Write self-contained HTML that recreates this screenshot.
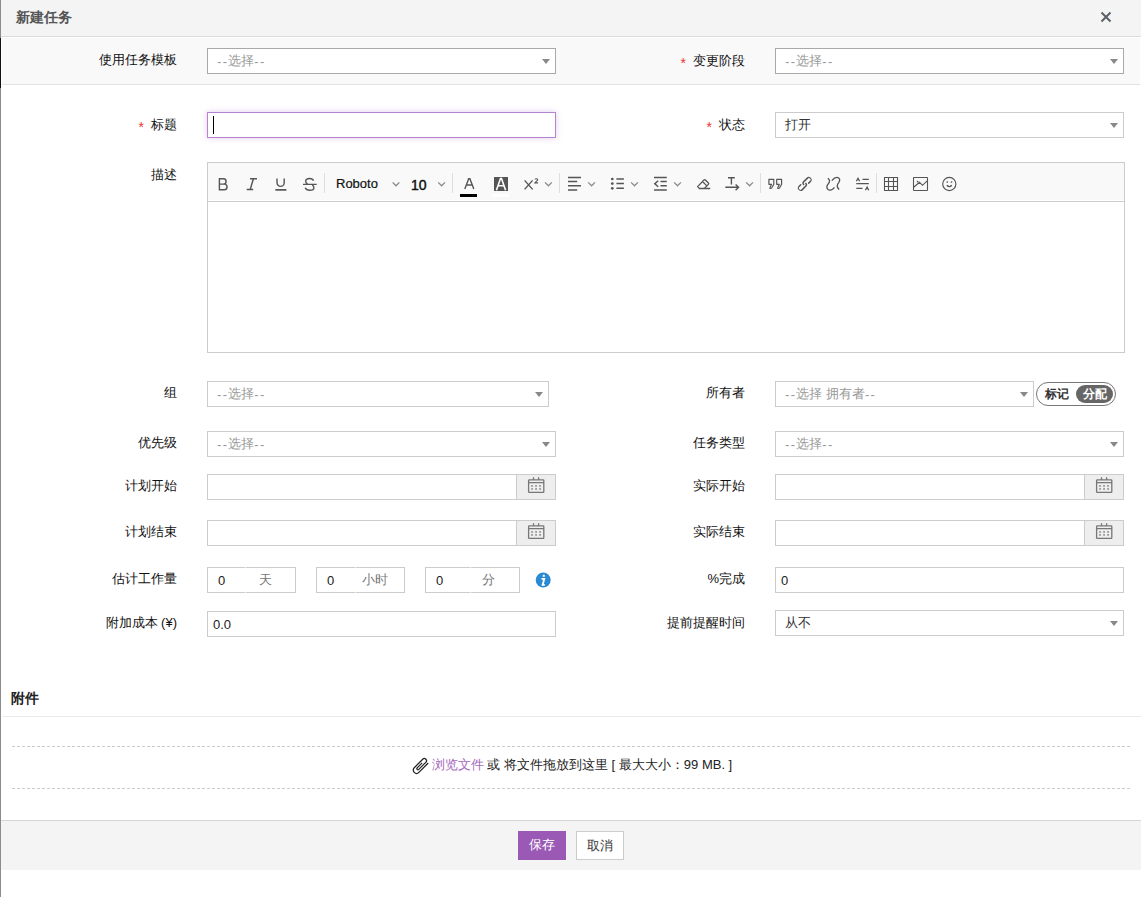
<!DOCTYPE html>
<html><head><meta charset="utf-8">
<style>
*{box-sizing:border-box;margin:0;padding:0}
html,body{width:1141px;height:897px;overflow:hidden;background:#fff;font-family:"Liberation Sans",sans-serif;font-size:13px;color:#222}
.a{position:absolute}
#edge{left:0;top:0;width:1px;height:897px;background:#8c8c8c}
#edge2{left:0;top:38px;width:1px;height:50px;background:#111}
#hdr{left:1px;top:0;width:1140px;height:37px;background:#f4f4f4;border-bottom:1px solid #dcdcdc}
#hdr .t{left:15px;top:9px;font-size:14px;font-weight:bold;color:#555;line-height:17px}
#tplrow{left:2px;top:38px;width:1138px;height:47px;background:#f9f9f9;border-bottom:1px solid #e2e2e2}
.lbl{position:absolute;text-align:right;width:200px;line-height:16px;font-size:13px;color:#111;white-space:nowrap}
.req{color:#e8322f;font-size:14px;margin-right:7px;position:relative;top:3px}
.box{position:absolute;height:26px;border:1px solid #ccc;background:#fff;font-size:13px;line-height:24px;padding-left:9px;color:#333;white-space:nowrap}
.box.ph{color:#999}
.d{font-weight:normal;letter-spacing:1.3px;position:relative;top:1px}
.box.dk{border-color:#a9a9a9}
.box.in{padding-left:5px;line-height:26px;color:#222}
.box.est{padding-left:10px;line-height:26px;color:#222}
.arr{position:absolute;right:5px;top:10px;width:0;height:0;border-left:4px solid transparent;border-right:4px solid transparent;border-top:5px solid #888}
.focus{border-color:#b584cf;box-shadow:0 0 6px rgba(170,110,200,.35)}
.cal{position:absolute;top:-1px;right:-1px;width:40px;height:26px;background:#eee;border:1px solid #ccc}
.unit{position:absolute;top:0;color:#777;line-height:24px}
#editor{left:207px;top:162px;width:918px;height:191px;border:1px solid #ccc}
#tb{left:0;top:0;width:916px;height:39px;background:#f9f9f9;border-bottom:1px solid #ccc;box-shadow:inset 0 -1px #fff}
.tbt{position:absolute;color:#111;white-space:nowrap}
#att{left:11px;top:690px;font-size:14px;font-weight:bold;color:#222;line-height:17px}
#attline{left:2px;top:716px;width:1139px;height:1px;background:#eaeaea}
.dash{position:absolute;left:12px;width:1118px;height:1px;background:repeating-linear-gradient(90deg,#ccc 0 3px,transparent 3px 5px)}
#droptxt{left:2px;top:757px;width:1141px;text-align:center;line-height:16px;font-size:13px;color:#222}
#ftr{left:1px;top:820px;width:1140px;height:50px;background:#f4f4f4;border-top:1px solid #d6d6d6}
.btn{position:absolute;top:10px;height:29px;font-size:13px;line-height:27px;text-align:center}
</style></head><body>
<div class="a" id="edge"></div><div class="a" id="edge2"></div>
<div class="a" id="hdr"><div class="a t">新建任务</div></div>
<div class="a" id="tplrow"></div>

<div class="lbl" style="left:-23px;top:52px">使用任务模板</div>
<div class="box ph dk" style="left:207px;top:48px;width:349px"><b class="d">--</b>选择<b class="d">--</b><i class="arr"></i></div>
<div class="lbl" style="left:545px;top:52px"><span class="req">*</span>变更阶段</div>
<div class="box ph dk" style="left:775px;top:48px;width:349px"><b class="d">--</b>选择<b class="d">--</b><i class="arr"></i></div>

<div class="lbl" style="left:-23px;top:116px"><span class="req">*</span>标题</div>
<div class="box focus" style="left:207px;top:112px;width:349px"></div>
<div class="lbl" style="left:545px;top:116px"><span class="req">*</span>状态</div>
<div class="box" style="left:775px;top:112px;width:349px">打开<i class="arr"></i></div>

<div class="lbl" style="left:-23px;top:167px">描述</div>
<div class="a" id="editor"><div class="a" id="tb"></div></div>
<div class="tbt" style="left:336px;top:176px;font-size:13px;line-height:15px;-webkit-text-stroke:0.2px #111">Roboto</div>
<div class="tbt" style="left:411px;top:177px;font-size:14px;line-height:16px;-webkit-text-stroke:0.45px #111">10</div>

<div class="lbl" style="left:-23px;top:385px">组</div>
<div class="box ph" style="left:207px;top:381px;width:342px"><b class="d">--</b>选择<b class="d">--</b><i class="arr"></i></div>
<div class="lbl" style="left:545px;top:385px">所有者</div>
<div class="box ph" style="left:775px;top:381px;width:259px"><b class="d">--</b>选择 拥有者<b class="d">--</b><i class="arr"></i></div>
<div class="a" style="left:1036px;top:382px;width:80px;height:24px;border:1px solid #777;border-radius:12px;background:#fff"></div>
<div class="a" style="left:1045px;top:387px;font-size:12px;font-weight:bold;color:#333;line-height:15px">标记</div>
<div class="a" style="left:1076px;top:385px;width:37px;height:18px;border-radius:9px;background:#666"></div>
<div class="a" style="left:1083px;top:387px;font-size:12px;font-weight:bold;color:#fff;line-height:15px">分配</div>

<div class="lbl" style="left:-23px;top:435px">优先级</div>
<div class="box ph" style="left:207px;top:431px;width:349px"><b class="d">--</b>选择<b class="d">--</b><i class="arr"></i></div>
<div class="lbl" style="left:545px;top:435px">任务类型</div>
<div class="box ph" style="left:775px;top:431px;width:349px"><b class="d">--</b>选择<b class="d">--</b><i class="arr"></i></div>

<div class="lbl" style="left:-23px;top:478px">计划开始</div>
<div class="box" style="left:207px;top:474px;width:349px"><div class="cal"></div></div>
<div class="lbl" style="left:545px;top:478px">实际开始</div>
<div class="box" style="left:775px;top:474px;width:349px"><div class="cal"></div></div>

<div class="lbl" style="left:-23px;top:524px">计划结束</div>
<div class="box" style="left:207px;top:520px;width:349px"><div class="cal"></div></div>
<div class="lbl" style="left:545px;top:524px">实际结束</div>
<div class="box" style="left:775px;top:520px;width:349px"><div class="cal"></div></div>

<div class="lbl" style="left:-23px;top:571px">估计工作量</div>
<div class="box est" style="left:207px;top:567px;width:89px">0<span class="unit" style="left:51px">天</span></div>
<div class="box est" style="left:316px;top:567px;width:89px">0<span class="unit" style="left:45px">小时</span></div>
<div class="box est" style="left:425px;top:567px;width:95px">0<span class="unit" style="left:56px">分</span></div>
<div class="a" style="left:245px;top:567px;width:1px;height:1px;background:#f2f2f2"></div><div class="a" style="left:245px;top:592px;width:1px;height:1px;background:#f2f2f2"></div><div class="a" style="left:355px;top:567px;width:1px;height:1px;background:#f2f2f2"></div><div class="a" style="left:355px;top:592px;width:1px;height:1px;background:#f2f2f2"></div><div class="a" style="left:470px;top:567px;width:1px;height:1px;background:#f2f2f2"></div><div class="a" style="left:470px;top:592px;width:1px;height:1px;background:#f2f2f2"></div>
<div class="lbl" style="left:545px;top:571px">%完成</div>
<div class="box in" style="left:775px;top:567px;width:349px">0</div>

<div class="lbl" style="left:-23px;top:615px">附加成本 (¥)</div>
<div class="box in" style="left:207px;top:611px;width:349px">0.0</div>
<div class="lbl" style="left:545px;top:615px">提前提醒时间</div>
<div class="box" style="left:775px;top:610px;width:349px">从不<i class="arr"></i></div>

<div class="a" id="att">附件</div>
<div class="a" id="attline"></div>
<div class="dash" style="top:746px"></div>
<div class="dash" style="top:788px"></div>
<div class="a" id="droptxt"><span style="display:inline-block;width:19px"></span><span style="color:#a569bd">浏览文件</span> 或 将文件拖放到这里 [ 最大大小：99 MB. ]</div>

<div class="a" id="ftr">
<div class="btn" style="left:517px;width:48px;background:#9b59b6;color:#fff">保存</div>
<div class="btn" style="left:575px;width:48px;background:#fff;border:1px solid #ccc;color:#333">取消</div>
</div>

<svg class="a" style="left:0;top:0" width="1141" height="897" viewBox="0 0 1141 897" fill="none" stroke-linecap="butt">
<!-- close -->
<path d="M1101.5 12.5L1110.5 21.5M1110.5 12.5L1101.5 21.5" stroke="#5b6168" stroke-width="2"/>
<!-- toolbar separators -->
<g fill="#ddd"><rect x="324" y="173" width="1" height="20"/><rect x="452" y="173" width="1" height="20"/><rect x="559" y="173" width="1" height="20"/><rect x="760" y="173" width="1" height="20"/><rect x="876" y="173" width="1" height="20"/></g>
<g stroke="#555" stroke-width="1.4">
<!-- B -->
<path d="M219.4 178.7H223.4A2.7 2.7 0 0 1 223.4 184.1H219.4ZM219.4 184.1H224.2A2.85 2.85 0 0 1 224.2 189.8H219.4Z"/>
<!-- I -->
<path d="M250 178.7H257M246.7 189.5H253.2M253.4 178.7L250.2 189.5"/>
<!-- U -->
<path d="M277 178.4V182.8A3.6 3.6 0 0 0 284.2 182.8V178.4"/>
<path d="M275.4 189.9H286.4" stroke-width="1.7"/>
<!-- S -->
<path d="M313.6 180.6C313 179.2 311.5 178.5 309.6 178.5C307.3 178.5 305.7 179.7 305.7 181.4C305.7 182.6 306.4 183.3 307.6 183.8M303 184.4H316.7M312.2 185.2C313.3 185.8 313.9 186.7 313.9 187.7C313.9 189.3 312.2 190.3 309.8 190.3C307.5 190.3 305.8 189.4 305.2 187.8"/>
<!-- A forecolor -->
<path d="M464.8 188.9L468.7 178.7H469.9L473.8 188.9M466.4 185H472.2"/>
<!-- X2 -->
<path d="M524.6 180.4L532.6 189.4M532.6 180.4L524.6 189.4"/>
<path d="M534.9 179.4C535.3 178.5 537.7 178.4 537.7 179.7C537.7 180.7 535.6 181.7 534.9 182.9H538.1" stroke-width="1.1"/>
<!-- align -->
<path d="M568 177.4H581M568 181.6H577.2M568 185.7H581M568 189.9H577.2" stroke-width="1.5"/>
<!-- list -->
<path d="M616.4 179H623.9M616.4 183.6H623.9M616.4 188.3H623.9" stroke-width="1.5"/>
<!-- outdent -->
<path d="M654 177.4H666.8M660.5 181.6H666.8M660.5 185.7H666.8M654 189.9H666.8M658.2 180.8L654.8 183.8L658.2 186.8" stroke-width="1.5"/>
<!-- eraser -->
<path d="M697.6 186.6L704 180Q704.7 179.3 705.4 180L708.4 183Q709.1 183.7 708.4 184.4L704.3 188.4H699.3ZM702.5 181.5L706.6 185.6M698.8 188.5H710.2" stroke-width="1.3"/>
<!-- T arrow -->
<path d="M728 177.8H734.8M731.4 177.8V184.6M725.3 187.3H738.6M735.6 184.4L738.6 187.3L735.6 190.2" stroke-width="1.4"/>
<!-- quote -->
<path d="M768.9 179.4H773.8V184.3L771.7 188Q771.4 188.5 770.9 188.5H770.4Q769.7 188.4 770 187.7L771.5 184.3H768.9ZM776.7 179.4H781.6V184.3L779.5 188Q779.2 188.5 778.7 188.5H778.2Q777.5 188.4 777.8 187.7L779.3 184.3H776.7Z" stroke-width="1.2" stroke-linejoin="round"/>
<!-- link -->
<path transform="translate(795.4 174.6) scale(0.778)" fill="#555" stroke="none" d="M6.2 12.3a1 1 0 0 1 1.4 1.4l-2 2a2 2 0 1 0 2.6 2.8l4.8-4.8a1 1 0 0 0 0-1.4 1 1 0 1 1 1.4-1.3 2.9 2.9 0 0 1 0 4L9.6 20a3.9 3.9 0 0 1-5.5-5.5l2-2zm11.6-.6a1 1 0 0 1-1.4-1.4l2-2a2 2 0 1 0-2.6-2.8L11 10.3a1 1 0 0 0 0 1.4A1 1 0 1 1 9.6 13a2.9 2.9 0 0 1 0-4L14.4 4a3.9 3.9 0 0 1 5.5 5.5l-2 2z"/>
<!-- unlink -->
<path d="M827.8 178.2C829.8 179.6 830.1 181.7 828.5 183.5C826.7 185.4 826.2 188 828 189.5C829.8 190.9 832.6 189.7 834.5 187.4M831.8 180.6C833.5 178.5 835.3 177.3 837.2 177.4C839.7 177.6 840.5 180.4 838.7 182.6C836.9 184.6 836.2 186.8 839.2 189.5" stroke-width="1.35"/>
<!-- lineheight-ish -->
<path d="M862.5 179.3H868.8M856.3 183.7H868.8M856.3 188.3H862.5M856.4 181.3L858 178.3L859.6 181.3M865.4 190.3L867.1 187.2L868.7 190.3" stroke-width="1.3"/>
<!-- table -->
<path d="M884.5 177.5H897.5V190.5H884.5ZM888.5 177.5V190.5M893.5 177.5V190.5M884.5 181.5H897.5M884.5 186.5H897.5" stroke-width="1.1"/>
<!-- image -->
<path d="M914 177.5H927Q927.5 177.5 927.5 178V190Q927.5 190.5 927 190.5H914Q913.5 190.5 913.5 190V178Q913.5 177.5 914 177.5ZM914 187L919.5 182.3L922.5 185.3L927.2 180.8" stroke-width="1.1"/>
<!-- emoji -->
<circle cx="949.3" cy="184" r="6.6" stroke-width="1.15"/>
<path d="M946.8 185.3Q949.3 188 951.8 185.3" stroke-width="1.3"/>
</g>
<g fill="#555">
<circle cx="612.3" cy="179" r="1.35"/><circle cx="612.3" cy="183.6" r="1.35"/><circle cx="612.3" cy="188.3" r="1.35"/>
<circle cx="917.6" cy="181.6" r="0.9"/>
<circle cx="947.3" cy="182" r="0.85"/><circle cx="951.5" cy="182" r="0.85"/>
<rect x="494" y="177" width="14" height="14"/>
</g>
<path d="M496.4 190.2L500.5 178.6H501.5L505.6 190.2M497.9 185.8H504.1" stroke="#fff" stroke-width="1.6"/><rect x="492" y="194" width="17" height="3" fill="#fff"/>
<rect x="460" y="194" width="17" height="3" fill="#000"/>
<g stroke="#8a8a8a" stroke-width="1.3">
<path d="M392.6 182.4L396 185.8L399.4 182.4M438.2 182.4L441.6 185.8L445 182.4M545 182.4L548.4 185.8L551.8 182.4M588.2 182.4L591.6 185.8L595 182.4M631.1 182.4L634.5 185.8L637.9 182.4M674.1 182.4L677.5 185.8L680.9 182.4M746.2 182.4L749.6 185.8L753 182.4"/>
</g>
<!-- cursor -->
<rect x="213" y="116" width="1" height="18" fill="#000"/>
<!-- calendars -->
<defs><g id="calicon"><path d="M529.2 479.8H543.2Q543.8 479.8 543.8 480.4V491.8Q543.8 492.4 543.2 492.4H529.2Q528.6 492.4 528.6 491.8V480.4Q528.6 479.8 529.2 479.8ZM528.6 482.7H543.8M533.5 477.2V479.8M538.6 477.2V479.8" stroke="#777" stroke-width="1.3" fill="none"/>
<g fill="#777"><rect x="531.3" y="485.2" width="1.5" height="1.5"/><rect x="535.3" y="485.2" width="1.5" height="1.5"/><rect x="539.3" y="485.2" width="1.5" height="1.5"/><rect x="531.3" y="488.2" width="1.5" height="1.5"/><rect x="535.3" y="488.2" width="1.5" height="1.5"/><rect x="539.3" y="488.2" width="1.5" height="1.5"/></g></g></defs>
<use href="#calicon"/><use href="#calicon" x="0" y="46"/><use href="#calicon" x="568" y="0"/><use href="#calicon" x="568" y="46"/>
<!-- info -->
<circle cx="543.2" cy="580" r="7.5" fill="#2a8bd2"/>
<rect x="542.8" y="574.8" width="2" height="2" fill="#fff"/>
<path d="M541.5 578.8H544.3L542.6 584.9H544.8" stroke="#fff" stroke-width="1.8" fill="none"/>
<!-- paperclip -->
<path transform="translate(420.8 765.8) rotate(-45)" d="M7.2 3.3H-6A3.3 3.3 0 0 1 -6 -3.3H6A2.2 2.2 0 0 1 6 1.1H-4A1.1 1.1 0 0 1 -4 -1.1H3" stroke="#222" stroke-width="1.25" fill="none"/>
</svg>
<script>
(function(){
var b=document.body,t=document.createElement('span');
t.style.cssText='position:absolute;left:0;top:0;visibility:hidden;font-size:13px;font-family:"Liberation Sans",sans-serif;white-space:nowrap';
t.textContent='\u4f7f\u7528\u4efb\u52a1\u6a21\u677f';b.appendChild(t);
var w=t.getBoundingClientRect().width;b.removeChild(t);
if(!(w>0)||w>=72)return;
var ls=(1-w/78).toFixed(3)+'em',re=/[\u3000-\u303f\u4e00-\u9fff\uff00-\uffef]+/g,nodes=[],it=document.createTreeWalker(b,NodeFilter.SHOW_TEXT,null),n;
while((n=it.nextNode())){if(re.test(n.nodeValue))nodes.push(n);re.lastIndex=0;}
nodes.forEach(function(n){var v=n.nodeValue,f=document.createDocumentFragment(),last=0,m;re.lastIndex=0;
while((m=re.exec(v))){if(m.index>last)f.appendChild(document.createTextNode(v.slice(last,m.index)));var sp=document.createElement('span');sp.style.letterSpacing=ls;sp.style.webkitTextStroke='0.7px currentColor';sp.textContent=m[0];f.appendChild(sp);last=m.index+m[0].length;}
if(last<v.length)f.appendChild(document.createTextNode(v.slice(last)));n.parentNode.replaceChild(f,n);});
})();
</script>
</body></html>
